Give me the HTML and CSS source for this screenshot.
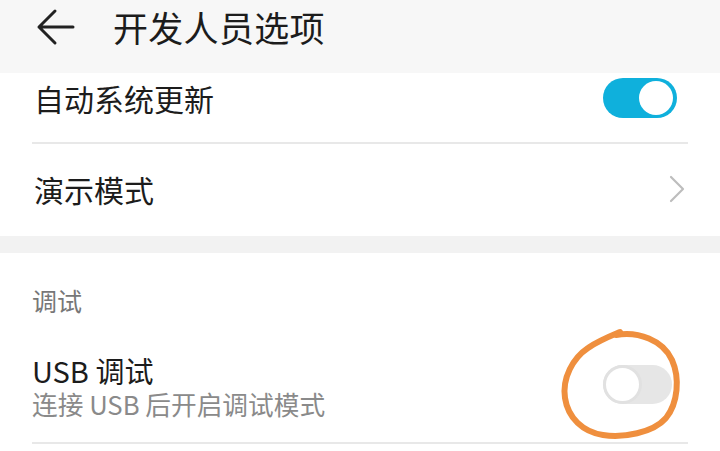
FILE: index.html
```html
<!DOCTYPE html>
<html lang="zh">
<head>
<meta charset="utf-8">
<title>开发人员选项</title>
<link rel="stylesheet" href="styles.css">
</head>
<body>
<div class="screen">
  <header class="appbar">
    <svg class="back" width="40" height="40" viewBox="0 0 40 40">
      <path d="M3 20 H37 M3 20 L19 4 M3 20 L19 36" fill="none" stroke="#222" stroke-width="3" stroke-linecap="round" stroke-linejoin="round"/>
    </svg>
    <h1 class="title">开发人员选项</h1>
  </header>

  <section class="group">
    <div class="row row-switch">
      <span class="label">自动系统更新</span>
      <span class="switch on"><span class="knob"></span></span>
    </div>
    <div class="row row-link">
      <span class="label">演示模式</span>
      <svg class="chevron" width="16" height="28" viewBox="0 0 16 28">
        <path d="M2 2 L14 14 L2 26" fill="none" stroke="#bdbdbd" stroke-width="2.2" stroke-linecap="round" stroke-linejoin="round"/>
      </svg>
    </div>
  </section>

  <div class="band"></div>

  <section class="group">
    <div class="subhead">调试</div>
    <div class="row row-two">
      <div class="texts">
        <span class="label2">USB 调试</span>
        <span class="sub">连接 USB 后开启调试模式</span>
      </div>
      <span class="switch-wrap">
        <span class="switch off"><span class="knob"></span></span>
        <svg class="scribble" width="130" height="120" viewBox="0 0 130 120">
          <path d="M53 7 C75 3 100 12 109 32 C117 50 115 75 103 90 C90 105 60 110 40 107 C20 104 5 90 2 70 C-1 50 10 30 25 20 C35 13 45 9 57 4" fill="none" stroke="#ef8f3e" stroke-width="6" stroke-linecap="round" stroke-linejoin="round"/>
        </svg>
      </span>
    </div>
  </section>
</div>
</body>
</html>
```

FILE: styles.css
```css
* { box-sizing: border-box; }
html, body {
  margin: 0;
  padding: 0;
  background: #ffffff;
}
body {
  font-family: "Noto Sans CJK SC", "Noto Sans", Roboto, sans-serif;
  color: #1c1c1c;
  width: 720px;
  height: 451px;
  overflow: hidden;
}
.screen {
  width: 720px;
}
.appbar {
  height: 73px;
  background: #f7f7f7;
  display: flex;
  align-items: center;
  padding-left: 36px;
  padding-bottom: 20px;
}
.back {
  display: block;
  flex: none;
}
.title {
  margin: 0 0 0 37px;
  font-size: 35px;
  font-weight: 400;
  line-height: 1;
  letter-spacing: 0.3px;
  color: #1c1c1c;
}
.group {
  background: #fff;
  padding: 0 32px;
}
.row {
  display: flex;
  align-items: center;
  justify-content: space-between;
  border-bottom: 2px solid #e8e8e8;
}
.row-switch {
  height: 71px;
  padding-bottom: 19px;
}
.row-link {
  height: 92px;
  border-bottom: none;
  padding-bottom: 2px;
}
.label {
  font-size: 30px;
  line-height: 1.2;
  padding-left: 2px;
}
.switch {
  position: relative;
  display: block;
  width: 74px;
  height: 40px;
  border-radius: 20px;
  flex: none;
}
.switch.on {
  background: #0fb0dc;
  margin-right: 11px;
}
.switch.on .knob {
  position: absolute;
  right: 4px;
  top: 3px;
  width: 34px;
  height: 34px;
  border-radius: 50%;
  background: #fff;
}
.switch.off {
  background: #e6e6e6;
  width: 69px;
  height: 39px;
}
.switch.off .knob {
  position: absolute;
  left: 0;
  top: 0;
  width: 39px;
  height: 39px;
  border-radius: 50%;
  background: #fff;
  border: 3px solid #e1e1e1;
}
.chevron {
  display: block;
  margin-right: 3px;
}
.band {
  height: 17px;
  background: #f2f2f2;
}
.subhead {
  font-size: 25px;
  line-height: 30px;
  color: #777;
  padding-top: 32px;
  height: 78px;
}
.row-two {
  height: 113px;
  padding-bottom: 4px;
}
.texts {
  display: flex;
  flex-direction: column;
}
.label2 {
  font-size: 29px;
  line-height: 38px;
  color: #1c1c1c;
}
.sub {
  font-size: 25.7px;
  line-height: 30px;
  color: #8a8a8a;
}
.switch-wrap {
  position: relative;
  display: block;
  margin-right: 16px;
}
.scribble {
  position: absolute;
  left: -40px;
  top: -37px;
  overflow: visible;
}
```
